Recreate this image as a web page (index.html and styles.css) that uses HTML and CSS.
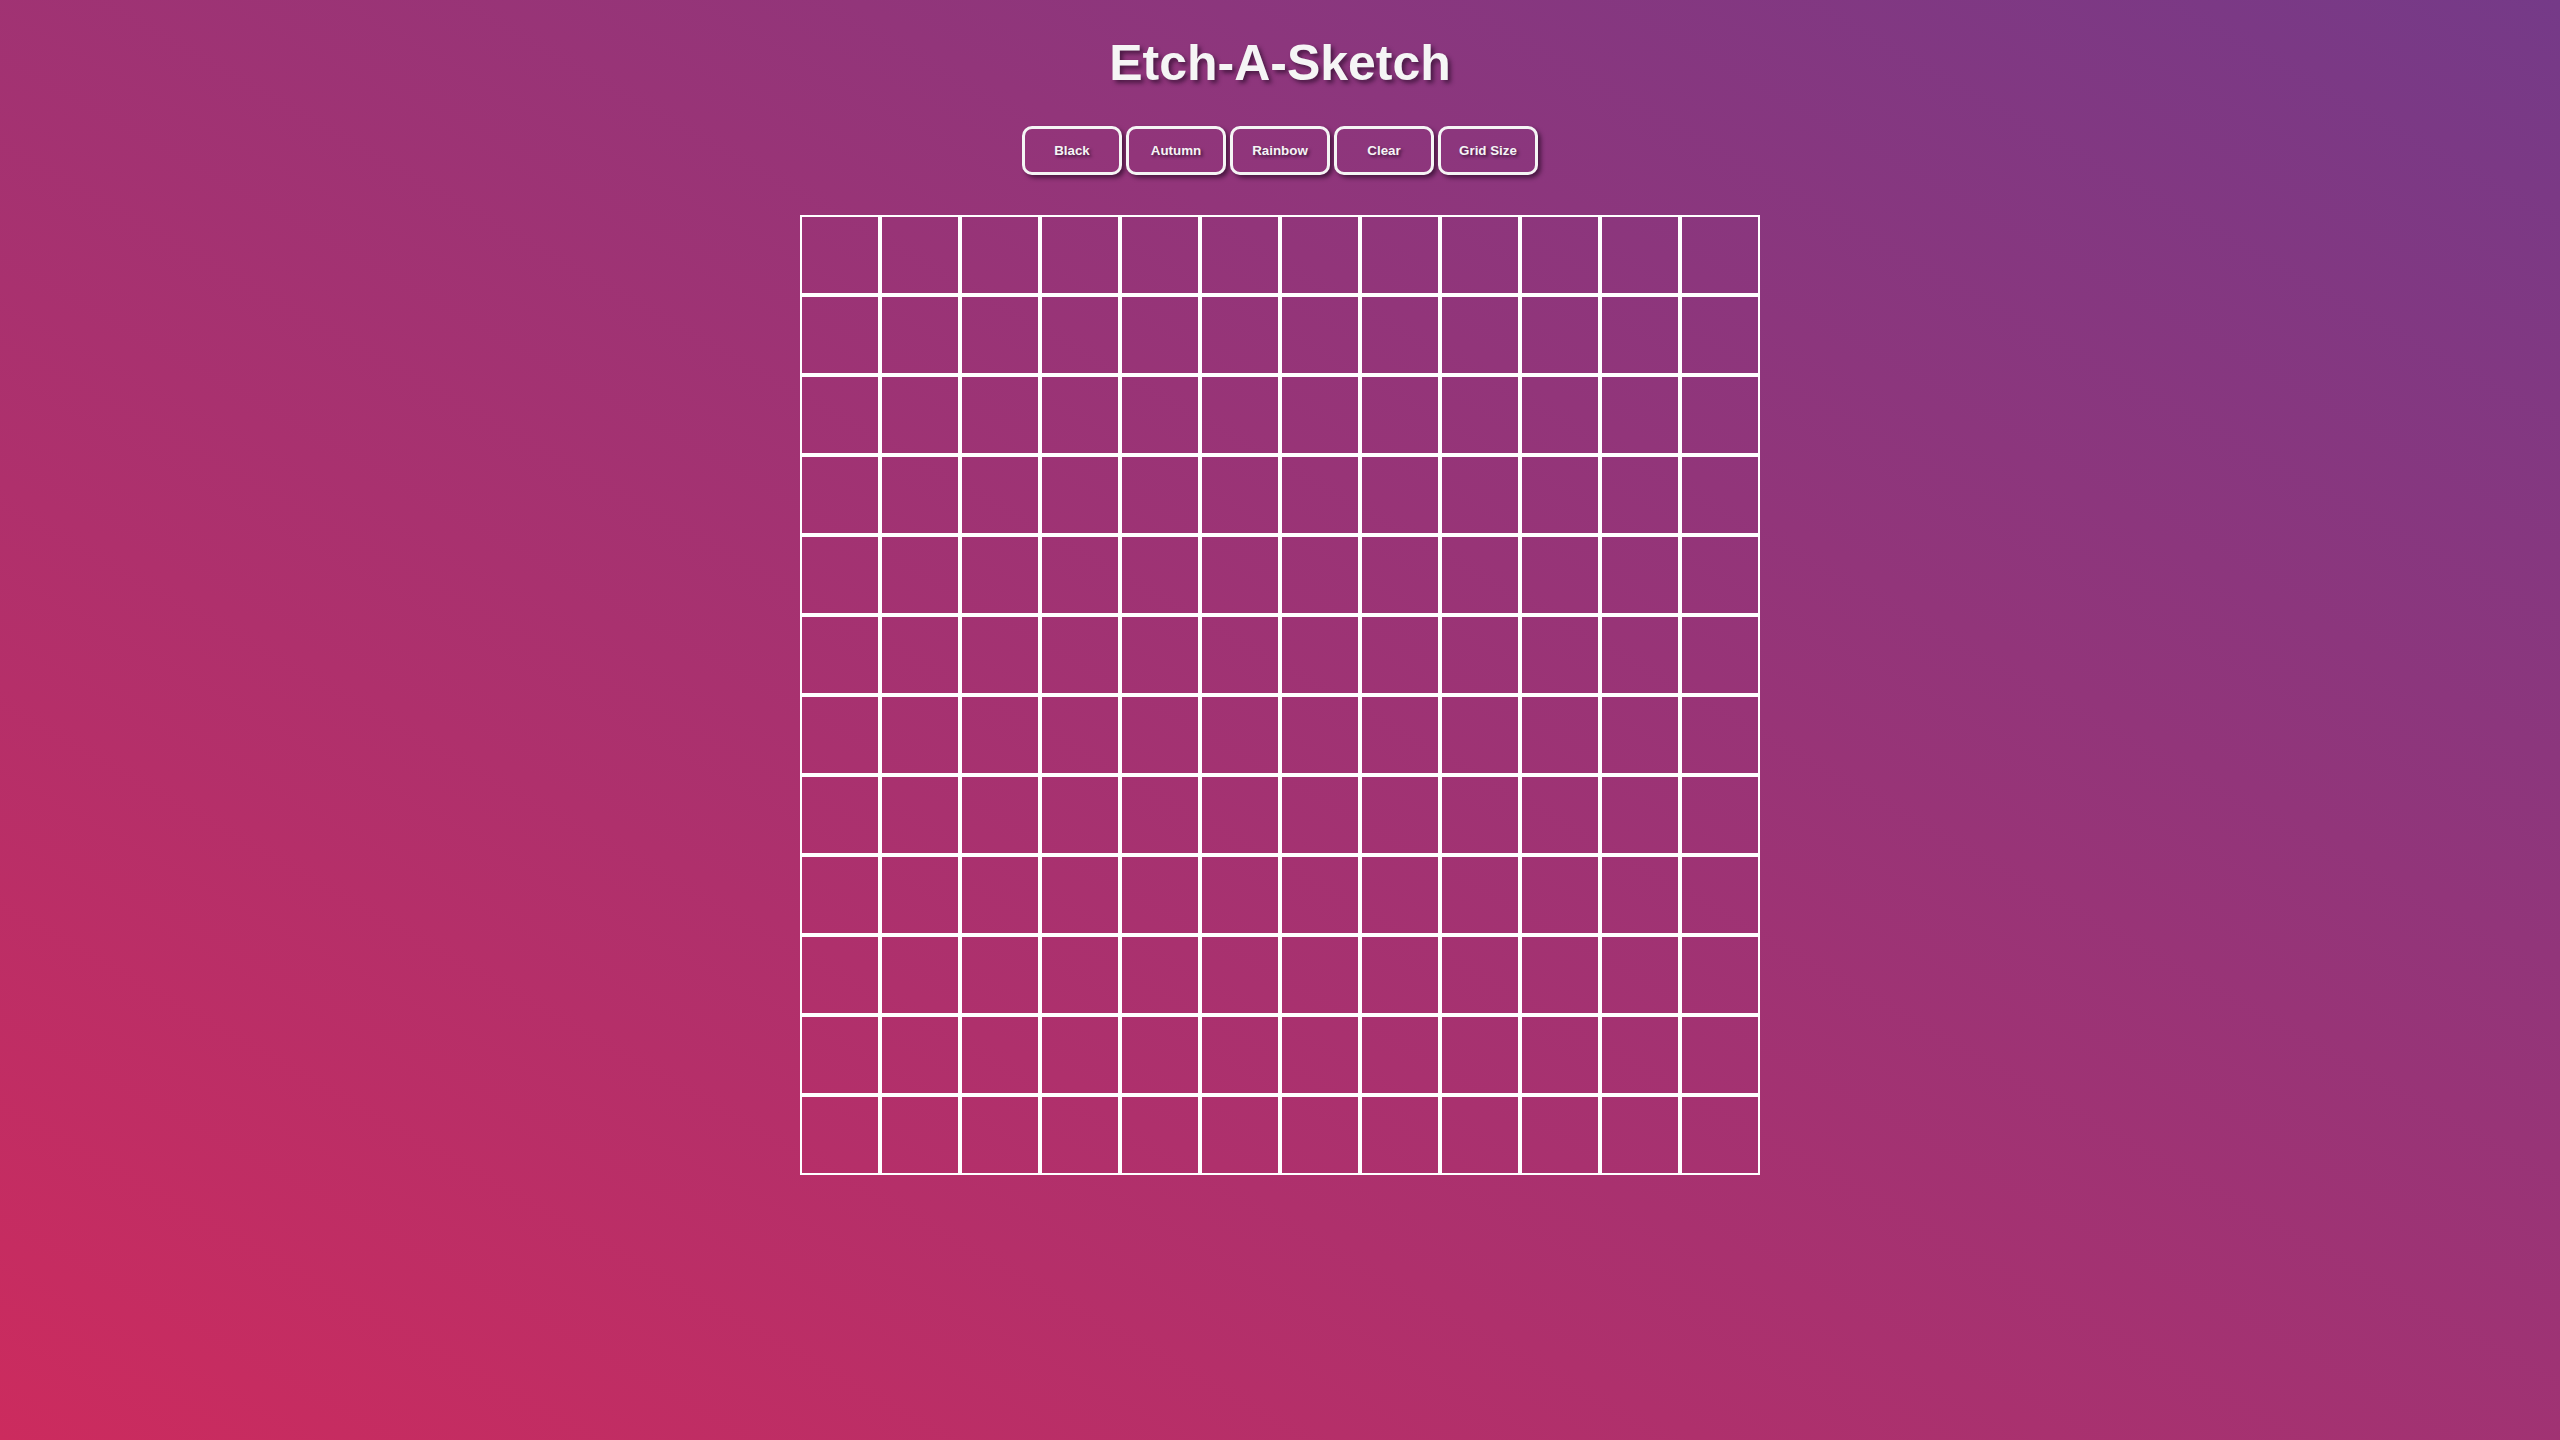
FILE: index.html
```html
<!DOCTYPE html>
<html lang="en">
<head>
<meta charset="utf-8">
<title>Etch-A-Sketch</title>
<link rel="stylesheet" href="styles.css">
</head>
<body>
<header class="header">
  <h1 class="title">Etch-A-Sketch</h1>
  <div class="controls">
    <button class="btn">Black</button>
    <button class="btn">Autumn</button>
    <button class="btn">Rainbow</button>
    <button class="btn">Clear</button>
    <button class="btn">Grid Size</button>
  </div>
</header>
<main class="board">
<div class="cell"></div><div class="cell"></div><div class="cell"></div><div class="cell"></div><div class="cell"></div><div class="cell"></div><div class="cell"></div><div class="cell"></div><div class="cell"></div><div class="cell"></div><div class="cell"></div><div class="cell"></div>
<div class="cell"></div><div class="cell"></div><div class="cell"></div><div class="cell"></div><div class="cell"></div><div class="cell"></div><div class="cell"></div><div class="cell"></div><div class="cell"></div><div class="cell"></div><div class="cell"></div><div class="cell"></div>
<div class="cell"></div><div class="cell"></div><div class="cell"></div><div class="cell"></div><div class="cell"></div><div class="cell"></div><div class="cell"></div><div class="cell"></div><div class="cell"></div><div class="cell"></div><div class="cell"></div><div class="cell"></div>
<div class="cell"></div><div class="cell"></div><div class="cell"></div><div class="cell"></div><div class="cell"></div><div class="cell"></div><div class="cell"></div><div class="cell"></div><div class="cell"></div><div class="cell"></div><div class="cell"></div><div class="cell"></div>
<div class="cell"></div><div class="cell"></div><div class="cell"></div><div class="cell"></div><div class="cell"></div><div class="cell"></div><div class="cell"></div><div class="cell"></div><div class="cell"></div><div class="cell"></div><div class="cell"></div><div class="cell"></div>
<div class="cell"></div><div class="cell"></div><div class="cell"></div><div class="cell"></div><div class="cell"></div><div class="cell"></div><div class="cell"></div><div class="cell"></div><div class="cell"></div><div class="cell"></div><div class="cell"></div><div class="cell"></div>
<div class="cell"></div><div class="cell"></div><div class="cell"></div><div class="cell"></div><div class="cell"></div><div class="cell"></div><div class="cell"></div><div class="cell"></div><div class="cell"></div><div class="cell"></div><div class="cell"></div><div class="cell"></div>
<div class="cell"></div><div class="cell"></div><div class="cell"></div><div class="cell"></div><div class="cell"></div><div class="cell"></div><div class="cell"></div><div class="cell"></div><div class="cell"></div><div class="cell"></div><div class="cell"></div><div class="cell"></div>
<div class="cell"></div><div class="cell"></div><div class="cell"></div><div class="cell"></div><div class="cell"></div><div class="cell"></div><div class="cell"></div><div class="cell"></div><div class="cell"></div><div class="cell"></div><div class="cell"></div><div class="cell"></div>
<div class="cell"></div><div class="cell"></div><div class="cell"></div><div class="cell"></div><div class="cell"></div><div class="cell"></div><div class="cell"></div><div class="cell"></div><div class="cell"></div><div class="cell"></div><div class="cell"></div><div class="cell"></div>
<div class="cell"></div><div class="cell"></div><div class="cell"></div><div class="cell"></div><div class="cell"></div><div class="cell"></div><div class="cell"></div><div class="cell"></div><div class="cell"></div><div class="cell"></div><div class="cell"></div><div class="cell"></div>
<div class="cell"></div><div class="cell"></div><div class="cell"></div><div class="cell"></div><div class="cell"></div><div class="cell"></div><div class="cell"></div><div class="cell"></div><div class="cell"></div><div class="cell"></div><div class="cell"></div><div class="cell"></div>
</main>
</body>
</html>
```
FILE: styles.css
```css
* { box-sizing: border-box; }
html, body { margin: 0; padding: 0; }
body {
  min-height: 100vh;
  background: linear-gradient(to top right, #cc2b5e, #753a88);
  font-family: "Liberation Sans", Arial, sans-serif;
  color: #f5f5f5;
  display: flex;
  flex-direction: column;
  align-items: center;
}
.header {
  display: flex;
  flex-direction: column;
  align-items: center;
  padding-top: 35px;
}
.title {
  margin: 0;
  font-size: 50px;
  font-weight: 700;
  line-height: 57px;
  color: #f5f5f5;
  text-shadow: 3px 3px 4px rgba(40, 10, 40, 0.65);
}
.controls {
  display: flex;
  gap: 4px;
  margin-top: 34px;
}
.btn {
  width: 100px;
  height: 49px;
  border: 3px solid #f5f5f5;
  border-radius: 10px;
  background: transparent;
  color: #f5f5f5;
  font-family: "Liberation Sans", Arial, sans-serif;
  font-size: 13.333px;
  font-weight: 700;
  text-shadow: 2px 2px 3px rgba(40, 10, 40, 0.7);
  box-shadow: 3px 3px 4px rgba(30, 5, 30, 0.6);
  padding: 0;
  cursor: pointer;
}
.board {
  margin-top: 40px;
  width: 960px;
  height: 960px;
  display: grid;
  grid-template-columns: repeat(12, 1fr);
  grid-template-rows: repeat(12, 1fr);
}
.cell {
  border: 2px solid #ffffff;
}
```
